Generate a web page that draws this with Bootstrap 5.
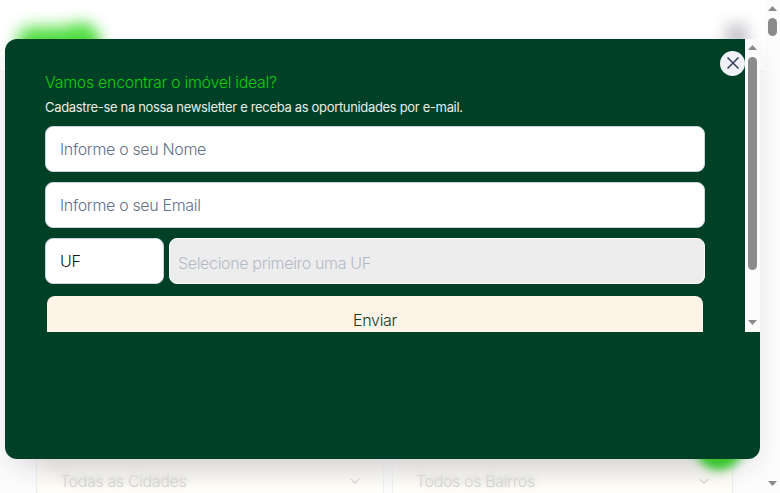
<!DOCTYPE html>
<html lang="pt-BR">
<head>
<meta charset="utf-8">
<meta name="viewport" content="width=device-width, initial-scale=1">
<title>Newsletter</title>
<link href="https://cdn.jsdelivr.net/npm/bootstrap@5.3.0/dist/css/bootstrap.min.css" rel="stylesheet">
<style>
body{font-family:Inter,"Liberation Sans",sans-serif;font-weight:350;width:780px;height:493px;overflow:hidden;background:#fff}
.stage{width:780px;height:493px;overflow:hidden}
.page-view{width:765px;height:493px;overflow:hidden}
.hero{height:422px;margin-top:71px;border-top:1px solid #f6f6f6;background:#fcfcfd}
.brand-blur{left:18px;top:27px;width:80px;height:34px;border-radius:12px;background:#4fdf3e;filter:blur(8px)}
.brand-peak{left:68px;top:24px;width:26px;height:30px;border-radius:12px;background:#4fdf3e;filter:blur(8px);opacity:.7}
.menu-blur{left:727px;top:25px;width:20px;height:20px;background:#b9b9c2;filter:blur(8px)}
.chat-blur{left:694px;top:418px;width:50px;height:52px;background:#35c52c;filter:blur(5px)}
.filters{left:36px;top:437px;width:697px;height:70px;gap:8px}
.filter-box{background:#fffdf7;border:1px solid #e9ecef;color:#bfbfbd;font-size:16px;padding:31px 22px 0 23px;width:348px}
.filter-box:last-child{width:341px}
.label-a,.label-b{letter-spacing:-.36px;text-shadow:0 -3px 6px #aaa}
.panel-shadow{left:5px;top:39px;width:755px;height:420px;border-radius:12px;box-shadow:0 10px 26px -3px rgba(30,30,50,.12)}
.fade-bottom{left:20px;top:459px;width:725px;height:34px;background:linear-gradient(rgba(218,216,217,.95),rgba(232,231,229,.72) 40%,rgba(250,249,245,.3) 80%,rgba(255,254,250,.2));-webkit-mask-image:linear-gradient(90deg,transparent,#000 35px,#000 690px,transparent)}
.panel{left:5px;top:39px;width:755px;height:420px;border-radius:12px 0 12px 12px;background:#004027}
.panel-scroll{width:755px;height:293px;overflow:hidden}
.panel-body{width:740px;padding:32px 40px 0}
.heading{color:#14cb10;font-size:16px;line-height:22px;letter-spacing:-.31px;margin:0;font-weight:350}
.sub{color:#e6eeea;font-size:13px;line-height:19px;margin:5px 0 9px;letter-spacing:-.33px;font-weight:380}
.field,.field:disabled{height:46px;border:1px solid #cbd5dc;border-radius:8px;font-size:16px;font-weight:350;padding:0 14px;color:#16181d;background:#fff;letter-spacing:-.34px}
.field::placeholder{color:#64708a;opacity:1}
.field.uf{width:119px;line-height:44px}
.field.city{background:#ededed;border-color:#fff;padding:4px 8px 0;color:#b3bac7}
.field.city::placeholder{color:#b3bac7}
.send{height:48px;margin:0 2px;border-radius:8px;border:0;font-size:16px;font-weight:350;letter-spacing:-.3px}
.send,.send:hover{background:#fdf3e6;color:#0a3a28}
.close-x{left:715px;top:12px;width:25px;height:25px;background:#f1f2f7;border:0;z-index:2}
.scroll-rail{width:15px;background:#fcfcfc}
.scroll-rail svg{display:block;width:15px;height:18px}
.thumb{width:9px;border-radius:5px;background:#8b8b8b;margin:0 auto}
.inner-thumb{height:213px}
.outer-thumb{height:18px;margin-left:3px}
</style>
<script src="https://cdn.jsdelivr.net/npm/bootstrap@5.3.0/dist/js/bootstrap.bundle.min.js"></script>
</head>
<body>
<div class="stage position-relative d-flex">
  <div class="page-view">
    <div class="hero"></div>
    <div class="position-absolute brand-blur"></div>
    <div class="position-absolute brand-peak"></div>
    <div class="position-absolute menu-blur"></div>
    <div class="position-absolute filters d-flex">
      <div class="filter-box d-flex justify-content-between"><span class="label-a">Todas as Cidades</span>
        <svg width="12" height="22" viewBox="0 0 12 22" fill="none" stroke="#bfbfbd" stroke-width="1.5"><path d="M2 10l4 4 4-4"/></svg></div>
      <div class="filter-box d-flex justify-content-between"><span class="label-b">Todos os Bairros</span>
        <svg width="12" height="22" viewBox="0 0 12 22" fill="none" stroke="#bfbfbd" stroke-width="1.5"><path d="M2 10l4 4 4-4"/></svg></div>
    </div>
    <div class="position-absolute panel-shadow"></div>
    <div class="position-absolute fade-bottom"></div>
    <div class="position-absolute chat-blur rounded-circle"></div>
  </div>
  <div class="scroll-rail d-flex flex-column">
    <svg viewBox="0 0 15 18"><path d="M3 11h9L7.500 6z" fill="#8b8b8b"/></svg>
    <div class="thumb outer-thumb"></div>
    <svg class="mt-auto" viewBox="0 0 15 18"><path d="M3 6h9l-4.500 5z" fill="#8b8b8b"/></svg>
  </div>

  <section class="position-absolute panel">
    <div class="panel-scroll d-flex">
      <div class="panel-body">
        <h1 class="heading">Vamos encontrar o imóvel ideal?</h1>
        <p class="sub">Cadastre-se na nossa newsletter e receba as oportunidades por e-mail.</p>
        <form>
          <input class="form-control field" placeholder="Informe o seu Nome" style="margin-bottom:10px">
          <input class="form-control field" placeholder="Informe o seu Email" style="margin-bottom:10px">
          <div class="d-flex" style="gap:5px;margin-bottom:12px">
            <div class="field uf flex-shrink-0">UF</div>
            <input class="form-control field city" placeholder="Selecione primeiro uma UF" disabled>
          </div>
          <div class="d-grid"><button type="button" class="btn send">Enviar</button></div>
        </form>
      </div>
      <div class="scroll-rail d-flex flex-column">
        <svg viewBox="0 0 15 18"><path d="M3 11h9L7.500 6z" fill="#8b8b8b"/></svg>
        <div class="thumb inner-thumb"></div>
        <svg class="mt-auto" viewBox="0 0 15 18"><path d="M3 6h9l-4.500 5z" fill="#8b8b8b"/></svg>
      </div>
    </div>
    <button type="button" class="position-absolute close-x rounded-circle p-0 d-flex" aria-label="Fechar">
      <svg width="25" height="25" viewBox="0 0 25 25" fill="none" stroke="#353e59" stroke-width="1.5"><path d="M7.500 6.500l11 11M18.500 6.500l-11 11"/></svg>
    </button>
  </section>
</div>
</body>
</html>
